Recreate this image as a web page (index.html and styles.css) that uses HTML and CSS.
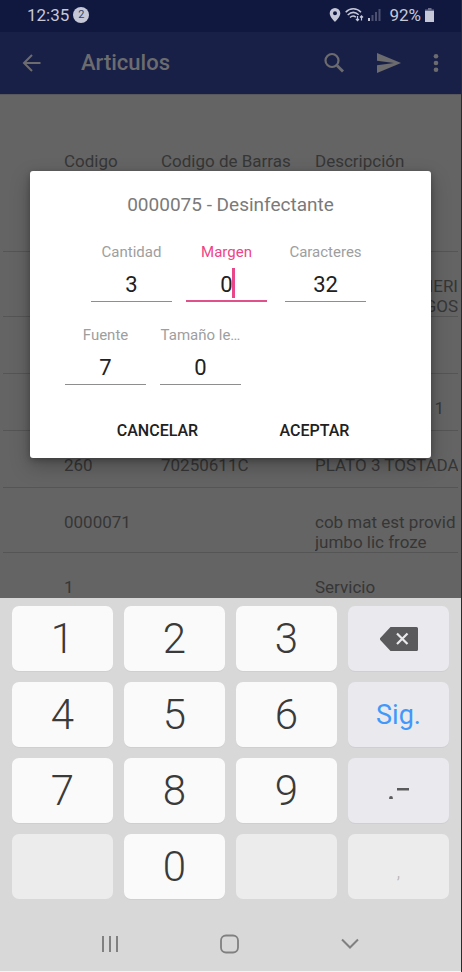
FILE: index.html
```html
<!DOCTYPE html>
<html lang="es">
<head>
<meta charset="utf-8">
<meta name="viewport" content="width=device-width, initial-scale=1">
<title>Articulos</title>
<link rel="stylesheet" href="styles.css">
</head>
<body>
<header class="status">
  <span class="clock">12:35</span>
  <span class="badge">2</span>
  <span class="status-icons">
    <svg width="12" height="16" viewBox="0 0 12 16"><path fill="currentColor" fill-rule="evenodd" d="M6 1a5.3 5.3 0 0 0-5.3 5.3C.7 10 6 15 6 15s5.300-5 5.300-8.700A5.300 5.300 0 0 0 6 1zm0 3.300a2 2 0 1 1 0 4 2 2 0 0 1 0-4z"/></svg>
    <svg class="wifi" width="19" height="16" viewBox="0 0 19 16" fill="none" stroke="currentColor" stroke-width="1.500"><path d="M.7 5.200C5 .6 11.500 .6 16 5.200M2.700 8c3.400-3.200 7.600-3.200 11-.3M5 10.500c2-1.800 4-1.800 5.800-.3"/><path stroke-width="1.200" d="M12.500 9v4.500M11 12l1.500 1.700L14 12M16.500 13.500V9M15 10.500l1.500-1.700 1.500 1.700"/></svg>
    <svg class="signal" width="13" height="14" viewBox="0 0 13 14"><path fill="currentColor" d="M0 10h2v3H0z"/><path fill="#4b5070" d="M3.500 7h2v6h-2zM7 4h2v9H7zM10.500 1h2v12h-2z"/></svg>
    <span>92%</span>
    <svg width="9" height="14" viewBox="0 0 9 14"><path fill="#6b6f8a" d="M3 0h3.500v2H3zM0 1.500h9v2H0z"/><path fill="currentColor" d="M0 3h9v11H0z"/></svg>
  </span>
</header>
<div class="app">
  <nav class="appbar">
    <button class="icon-btn" aria-label="Volver"><svg width="20" height="20" viewBox="0 0 20 20" fill="none" stroke="currentColor" stroke-width="2"><path d="M18.500 10H2.500M10 2 2 10l8 8"/></svg></button>
    <h1>Articulos</h1>
    <button class="icon-btn" aria-label="Buscar"><svg width="22" height="22" viewBox="0 0 22 22" fill="none" stroke="currentColor" stroke-width="2.200"><circle cx="9" cy="8.500" r="6.500"/><path stroke-width="2.800" d="m14 13.500 6 6"/></svg></button>
    <button class="icon-btn send" aria-label="Enviar"><svg width="24" height="20" viewBox="0 0 24 20"><path fill="currentColor" d="M0 0l24 10L0 20v-7.800L17 10 0 7.800z"/></svg></button>
    <button class="icon-btn" aria-label="Más opciones"><svg width="6" height="20" viewBox="0 0 6 20" fill="currentColor"><circle cx="3" cy="3.200" r="2.300"/><circle cx="3" cy="10" r="2.300"/><circle cx="3" cy="16.800" r="2.300"/></svg></button>
  </nav>
  <main class="list">
    <table class="items">
      <colgroup><col class="col-code"><col class="col-bar"><col></colgroup>
      <thead><tr><th>Codigo</th><th>Codigo de Barras</th><th>Descripción</th></tr></thead>
      <tbody>
        <tr><td></td><td></td><td class="end">NERI<br>GOS</td></tr>
        <tr><td></td><td></td><td></td></tr>
        <tr><td></td><td></td><td class="end inset">1</td></tr>
        <tr><td>260</td><td>70250611C</td><td>PLATO 3 TOSTADA</td></tr>
        <tr><td>0000071</td><td></td><td>cob mat est provid<br>jumbo lic froze</td></tr>
        <tr><td>1</td><td></td><td>Servicio</td></tr>
      </tbody>
    </table>
  </main>
  <div class="overlay">
    <form class="dialog" role="dialog" aria-labelledby="dialog-title">
      <h2 id="dialog-title">0000075 - Desinfectante</h2>
      <div class="fields">
        <div class="field"><label for="cantidad">Cantidad</label><input id="cantidad" value="3" inputmode="numeric"></div>
        <div class="field active"><label for="margen">Margen</label><input id="margen" value="0" inputmode="numeric"></div>
        <div class="field"><label for="caracteres">Caracteres</label><input id="caracteres" value="32" inputmode="numeric"></div>
      </div>
      <div class="fields second">
        <div class="field"><label for="fuente">Fuente</label><input id="fuente" value="7" inputmode="numeric"></div>
        <div class="field"><label for="tamano">Tamaño le…</label><input id="tamano" value="0" inputmode="numeric"></div>
      </div>
      <div class="actions">
        <button type="button">CANCELAR</button>
        <button type="button">ACEPTAR</button>
      </div>
    </form>
  </div>
</div>
<section class="keyboard">
  <div class="keys">
    <button>1</button><button>2</button><button>3</button>
    <button class="fn" aria-label="Borrar"><svg width="38" height="24" viewBox="0 0 38 24"><path fill="#5a5a5c" d="M10.500 0H36.500A1.500 1.500 0 0 1 38 1.500v21a1.500 1.500 0 0 1-1.500 1.500H10.500L.5 13.200a1.600 1.600 0 0 1 0-2.400z"/><path stroke="#eaeaee" stroke-width="2.200" d="m17 6.500 10.500 10.500M27.500 6.500 17 17"/></svg></button>
    <button>4</button><button>5</button><button>6</button>
    <button class="fn next">Sig.</button>
    <button>7</button><button>8</button><button>9</button>
    <button class="fn" aria-label="Punto y guion"><svg width="22" height="16" viewBox="0 0 22 16" fill="#5a5a5c"><circle cx="3" cy="15" r="1.900"/><path d="M9 5h12v2.500H9z"/></svg></button>
    <button class="off" disabled aria-label="Vacío"></button><button>0</button>
    <button class="off" disabled aria-label="Vacío"></button>
    <button class="off comma" disabled>,</button>
  </div>
  <div class="navbar">
    <button aria-label="Recientes"><svg width="18" height="18" viewBox="0 0 18 18" stroke="currentColor" stroke-width="2"><path d="M2 1v16M9 1v16M16 1v16"/></svg></button>
    <button aria-label="Inicio"><svg width="20" height="20" viewBox="0 0 20 20" fill="none" stroke="currentColor" stroke-width="1.800"><rect x="1" y="1.500" width="17" height="17" rx="5"/></svg></button>
    <button aria-label="Ocultar teclado"><svg width="18" height="12" viewBox="0 0 18 12" fill="none" stroke="currentColor" stroke-width="2"><path d="m1 1.500 8 8 8-8"/></svg></button>
  </div>
</section>
</body>
</html>
```
FILE: styles.css
```css
* { box-sizing: border-box; }

body {
  margin: 0;
  height: 100vh;
  display: flex;
  flex-direction: column;
  border-right: 1px solid #2b2b2e;
  background: #646464;
  font-family: Roboto, "Liberation Sans", sans-serif;
}

button {
  margin: 0;
  padding: 0;
  border: 0;
  background: none;
  font: inherit;
  color: inherit;
}

svg { display: block; flex: none; }

.status {
  height: 32px;
  display: flex;
  align-items: center;
  padding: 0 27px 3px;
  background: #10183f;
  color: #c6c8d8;
  font-size: 17px;
  line-height: 20px;
}

.badge {
  width: 16px;
  height: 16px;
  margin-left: 4px;
  border-radius: 50%;
  background: #c6c8d8;
  color: #3a3f5c;
  font-size: 11px;
  line-height: 16px;
  text-align: center;
}

.status-icons {
  display: flex;
  align-items: center;
  gap: 4px;
  margin-left: auto;
}

.status-icons .signal { margin-right: 4px; }

.app {
  position: relative;
  flex: 1;
  min-height: 0;
  display: flex;
  flex-direction: column;
  overflow: hidden;
}

.appbar {
  flex: none;
  height: 62px;
  display: flex;
  align-items: center;
  padding: 0 22px;
  background: #192048;
  color: #6c6c6e;
}

.appbar h1 {
  flex: 1;
  margin: 0 0 0 39px;
  font-size: 22px;
  line-height: 26px;
  font-weight: 500;
}

.icon-btn + .icon-btn { margin-left: 32px; }

.list {
  flex: 1;
  min-height: 0;
  padding: 0 3px;
  overflow: hidden;
  border-top: 1px solid #58585c;
}

.items {
  width: 100%;
  table-layout: fixed;
  border-collapse: separate;
  border-spacing: 0;
  color: #363636;
  font-size: 17px;
  line-height: 20px;
}

.col-code { width: 158px; }
.col-bar { width: 154px; }

.items th,
.items td {
  height: 57px;
  padding: 24px 0 0;
  border-bottom: 1px solid #555;
  overflow: hidden;
  vertical-align: top;
  white-space: nowrap;
  text-align: left;
  font-weight: 400;
}

.items th { height: 157px; padding-top: 56px; }

.items th:first-child,
.items td:first-child { padding-left: 61px; }

.items .end { text-align: right; }
.items .inset { padding-right: 14px; }

.overlay {
  position: absolute;
  inset: 0;
  display: flex;
  align-items: center;
  padding: 0 30px 2px;
}

.dialog {
  flex: 1;
  padding: 22px 16px 8px;
  border-radius: 3px;
  background: #fff;
  box-shadow: 0 8px 20px rgba(0, 0, 0, .25), 0 2px 6px rgba(0, 0, 0, .25);
}

.dialog h2 {
  margin: 0;
  color: #7a7a7a;
  font-size: 19px;
  line-height: 24px;
  font-weight: 400;
  text-align: center;
}

.fields {
  display: grid;
  grid-template-columns: 95px 99px 81px;
  margin-top: 26px;
  padding-left: 45px;
}

.fields.second {
  margin-top: 24px;
  padding-left: 19px;
}

.field {
  position: relative;
  width: 81px;
  display: flex;
  flex-direction: column;
  color: #9e9e9e;
}

.field label {
  font-size: 15px;
  line-height: 18px;
  text-align: center;
  white-space: nowrap;
}

.field input {
  width: 100%;
  height: 41px;
  padding: 8px 0 0;
  border: 0;
  border-bottom: 1px solid #8e8e8e;
  border-radius: 0;
  outline: 0;
  background: none;
  color: #212121;
  font: inherit;
  font-size: 22px;
  text-align: center;
}

.field.active label { color: #ee4488; }
.field.active input { border-bottom: 2px solid #e0508a; }

/* text cursor, drawn after the centred digit */
.field.active::after {
  content: "";
  position: absolute;
  top: 25px;
  left: 46px;
  width: 3px;
  height: 30px;
  background: #e8478a;
}

.actions {
  display: grid;
  grid-template-columns: 1fr 1fr;
  margin-top: 27px;
  padding: 0 22px 0 33px;
  color: #212121;
  font-size: 16px;
  font-weight: 500;
}

.actions button { height: 38px; }

.keyboard {
  flex: none;
  padding-top: 8px;
  border-bottom: 1px solid #f4f4f4;
  background: #d8d8d8;
}

.keys {
  display: grid;
  grid-template-columns: repeat(4, 1fr);
  grid-auto-rows: 65px;
  gap: 11px;
  padding: 0 12px;
}

.keys button {
  display: flex;
  align-items: center;
  justify-content: center;
  border-radius: 7px;
  background: #fafafa;
  box-shadow: 0 1px 0 #cfcfcf;
  color: #3a3a3a;
  font-size: 42px;
  line-height: 48px;
  font-weight: 300;
}

.keys .fn { background: #e9e9ee; }

.keys .next {
  color: #4298fa;
  font-size: 27px;
  font-weight: 400;
}

.keys .off {
  background: #ececec;
  box-shadow: none;
}

.keys .comma {
  padding-top: 8px;
  color: #b4b4b4;
  font-size: 20px;
}

.navbar {
  height: 72px;
  display: grid;
  grid-template-columns: repeat(3, 120px);
  justify-content: center;
  padding: 18px 2px 1px 0;
  color: #808080;
}

.navbar button {
  display: flex;
  align-items: center;
  justify-content: center;
}
```
